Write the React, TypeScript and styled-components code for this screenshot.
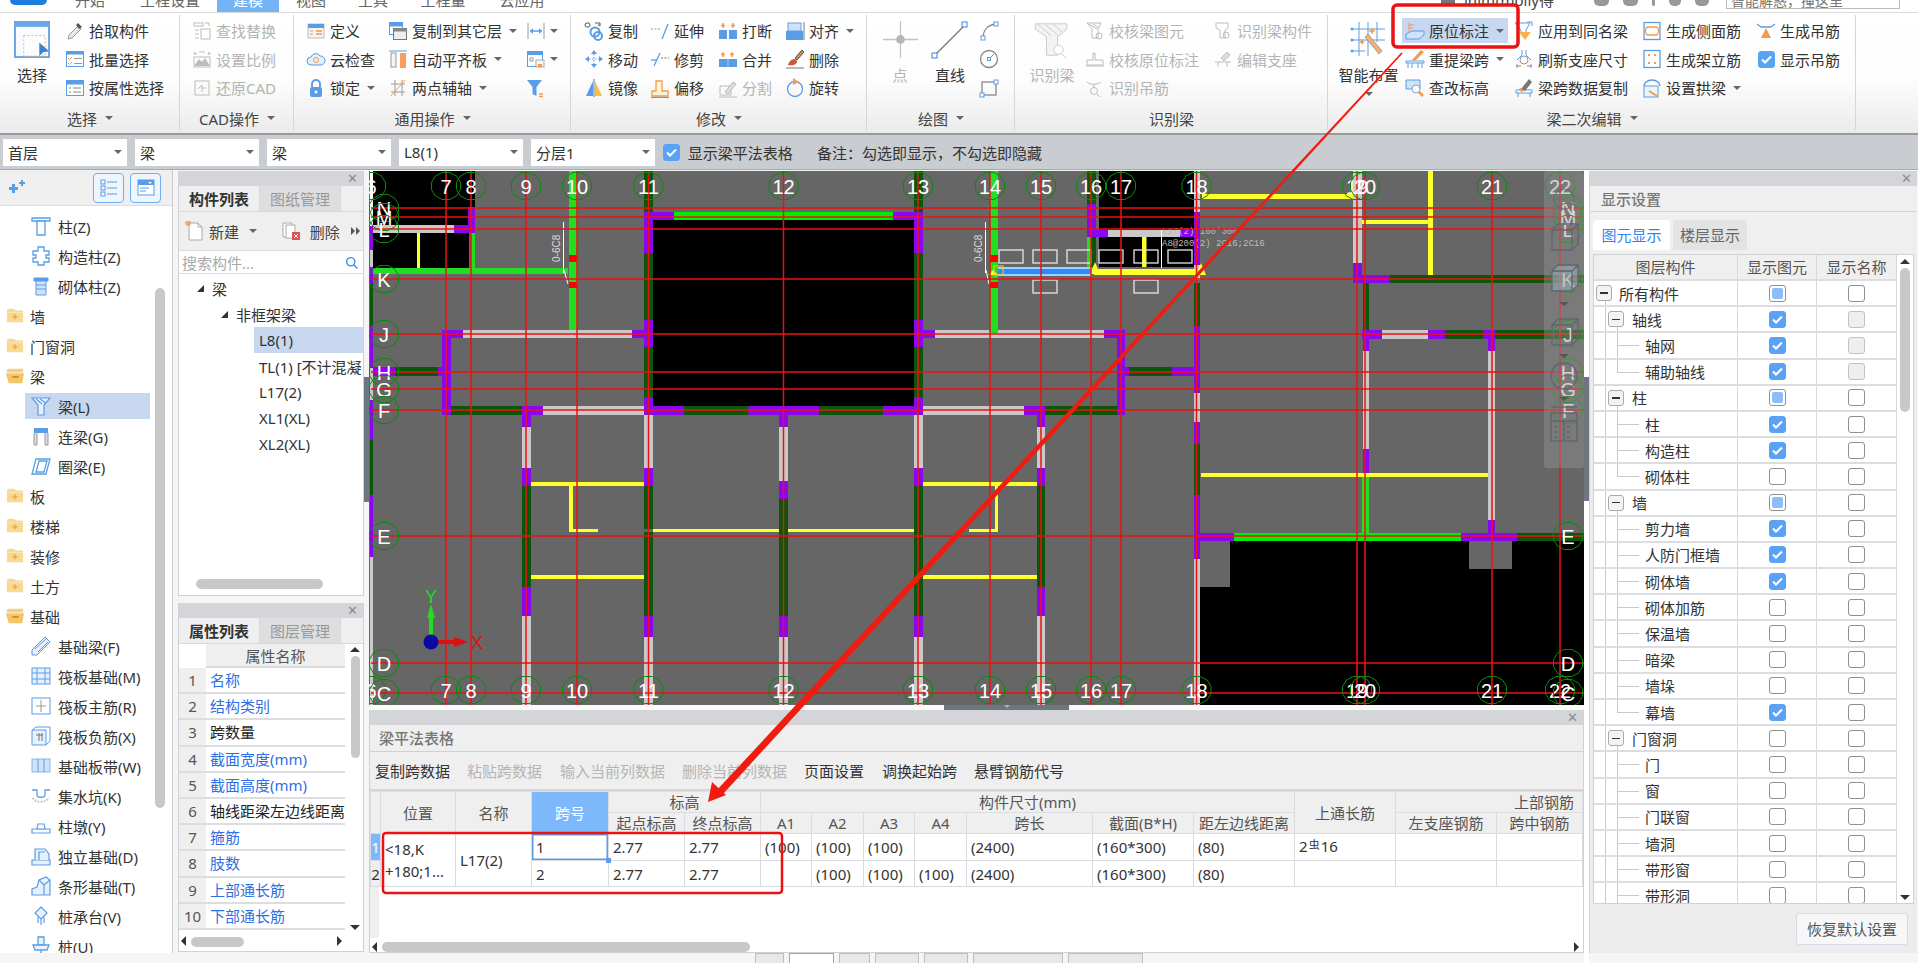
import React from "react";
import styled, { createGlobalStyle } from "styled-components";

const Global = createGlobalStyle`
  html, body { margin: 0; padding: 0; background: #e3e4e7; overflow: hidden; }
  * { box-sizing: border-box; }
  body { font-family: "Noto Sans", "Noto Sans CJK SC", sans-serif; font-size: 15px; color: #333; }
`;

const Root = styled.div`position: relative; width: 1918px; height: 963px; overflow: hidden; display: flex; flex-direction: column; background: #e3e4e7;`;

/* ---------- top strip ---------- */
const TopStrip = styled.div`height: 13px; flex: none; display: flex; background: #fff; border-bottom: 1px solid #dcdcdc; overflow: hidden; color: #555;`;
const LogoSlot = styled.div`width: 57px; flex: none; position: relative;`;
const LogoBlip = styled.div`width: 37px; height: 5px; margin-left: 10px; background: #1c7fe0; border-radius: 0 0 10px 10px;`;
const TopTab = styled.div<{ $w: number; $on?: boolean }>`
  width: ${p => p.$w}px; height: 12px; line-height: 1px; text-align: center; flex: none;
  background: ${p => (p.$on ? "#74b4f6" : "transparent")}; color: ${p => (p.$on ? "#fff" : "#666")};
`;
const TopRight = styled.div`margin-left: auto; display: flex; align-items: flex-start; width: 477px; flex: none;`;
const Avatar = styled.div`width: 14px; height: 5px; background: #777; margin-right: 9px;`;
const UserText = styled.div`width: 130px; line-height: 1px; color: #444;`;
const TopIcons = styled.div`display: flex; gap: 14px; width: 132px; color: #888; font-size: 12px; line-height: 6px;`;
const TopDot = styled.div<{ $w: number }>`width: ${p => p.$w}px; height: 6px; background: #999; border-radius: 0 0 5px 5px;`;
const TopSearch = styled.div`width: 174px; height: 9px; border: 1px solid #bbb; border-top: 0; line-height: 1px; padding-left: 4px; color: #777; font-size: 14px; overflow: hidden;`;

/* ---------- ribbon ---------- */
const Ribbon = styled.div`height: 122px; flex: none; display: flex; background: linear-gradient(#fff 0%, #fdfdfd 55%, #ebebeb 100%); border-bottom: 2px solid #9a9a9a;`;
const GroupWrap = styled.div<{ $w: number }>`
  width: ${p => p.$w}px; flex: none; display: flex; flex-direction: column; position: relative;
  &::after { content: ""; position: absolute; right: 0; top: 2px; bottom: 3px; width: 1px; background: #d6d6d6; }
`;
const GroupBody = styled.div<{ $pad: number }>`height: 93px; padding-left: ${p => p.$pad}px; display: flex; flex: none;`;
const GroupFoot = styled.div`height: 24px; display: flex; align-items: center; justify-content: center; color: #444; white-space: nowrap;`;
const ToolCol = styled.div<{ $w: number }>`width: ${p => p.$w}px; flex: none; display: flex; flex-direction: column; gap: 3.5px; padding-top: 5px;`;
const ToolRow = styled.div<{ $on?: boolean; $off?: boolean }>`
  height: 25px; display: flex; align-items: center; white-space: nowrap;
  color: ${p => (p.$off ? "#b4b4b4" : "#333")};
  background: ${p => (p.$on ? "#c6d7ef" : "transparent")};
  margin-left: ${p => (p.$on ? "-2px" : 0)};
  padding-left: ${p => (p.$on ? "2px" : 0)};
  width: ${p => (p.$on ? "106px" : "auto")};
`;
const IconBox = styled.span`width: 22px; height: 20px; margin-right: 3px; flex: none; display: flex; align-items: center; justify-content: center;`;
const Caret = styled.span<{ $gap?: number }>`
  display: inline-block; width: 0; height: 0; border-left: 4px solid transparent; border-right: 4px solid transparent; border-top: 4px solid #666;
  margin-left: ${p => p.$gap ?? 7}px; flex: none;
`;
const LargeTool = styled.div<{ $w: number; $off?: boolean }>`
  width: ${p => p.$w}px; flex: none; display: flex; flex-direction: column; align-items: center; padding-top: 8px;
  color: ${p => (p.$off ? "#b4b4b4" : "#333")}; white-space: nowrap;
`;
const IconSlot = styled.div`height: 37px; flex: none; display: flex; align-items: center; justify-content: center;`;
const LargeLabel = styled.div`margin-top: 7px; line-height: 20px;`;
const LargeCaret = styled.div`margin-top: 2px; line-height: 6px;`;

/* ---------- sub bar ---------- */
const SubBar = styled.div`height: 35px; flex: none; background: #c9ccd1; display: flex; align-items: center; padding-left: 3px; border-bottom: 1px solid #aaa;`;
const Select = styled.div`width: 124px; height: 27px; margin-right: 8px; background: #fff; display: flex; align-items: center; justify-content: space-between; padding: 0 5px; color: #333; flex: none;`;
const SubText = styled.span<{ $w: number }>`width: ${p => p.$w}px; flex: none; color: #333; white-space: nowrap;`;

/* ---------- main ---------- */
const Main = styled.div`flex: 1; display: flex; background: #f5f5f5; min-height: 0;`;
const LeftNav = styled.div`width: 173px; height: 783px; flex: none; display: flex; flex-direction: column; background: #fff; border-right: 1px solid #c9c9c9; position: relative; overflow: hidden;`;
const NavHead = styled.div`height: 36px; flex: none; background: #efefef; display: flex; align-items: center; padding-left: 7px; margin-bottom: 5px; border-bottom: 1px solid #ddd;`;
const NavBtn = styled.div<{ $ml: number }>`width: 31px; height: 30px; margin-left: ${p => p.$ml}px; border: 1px solid #6fb0f2; border-radius: 4px; background: #eef5fd; display: flex; align-items: center; justify-content: center;`;
const NavRow = styled.div<{ $kid?: boolean; $on?: boolean }>`
  height: 30px; flex: none; display: flex; align-items: center; padding-left: ${p => (p.$kid ? 25 : 6)}px; color: #333; white-space: nowrap; position: relative;
  ${p => p.$on ? `&::before { content: ""; position: absolute; left: 25px; top: 2px; width: 125px; height: 26px; background: #c6d7ef; }` : ""}
  & > * { position: relative; }
`;
const NavIcon = styled.span<{ $kid?: boolean }>`width: ${p => (p.$kid ? 33 : 24)}px; flex: none; display: flex; align-items: center; ${p => p.$kid ? "padding-left: 6px;" : ""}`;
const NavScroll = styled.div`position: absolute; left: 155px; top: 118px; width: 10px; height: 520px; background: #c8c8c8; border-radius: 5px;`;

const MidCol = styled.div`width: 186px; flex: none; margin-left: 5px; display: flex; flex-direction: column; gap: 7px; padding-top: 1px;`;
const Panel = styled.div<{ $h: number }>`height: ${p => p.$h}px; flex: none; display: flex; flex-direction: column; background: #fff; border: 1px solid #cfd1d5; border-top: 0; position: relative; overflow: hidden;`;
const PanelTitle = styled.div`height: 15px; flex: none; background: #d3d5d9; display: flex; align-items: center; justify-content: flex-end; padding-right: 5px; color: #8b8b8b; font-size: 13px; line-height: 15px;`;
const TabRow = styled.div`height: 26px; flex: none; display: flex; background: #efefef; border-bottom: 1px solid #d8d8d8;`;
const PanelTab = styled.div<{ $on?: boolean }>`width: 81px; text-align: center; line-height: 26px; font-weight: ${p => (p.$on ? 700 : 400)}; color: ${p => (p.$on ? "#333" : "#999")}; background: ${p => (p.$on ? "#efefef" : "#dedede")}; border-right: 1px solid #d8d8d8;`;
const PanelTools = styled.div`height: 38px; flex: none; background: #efefef; display: flex; align-items: center; padding: 0 3px 0 6px; color: #444;`;
const MoreTools = styled.div`margin-left: auto; display: flex; gap: 1px;`;
const SearchBox = styled.div`height: 24px; flex: none; background: #fff; border-top: 1px solid #ddd; border-bottom: 1px solid #ddd; display: flex; align-items: center; justify-content: space-between; padding: 0 4px 0 3px; color: #aaa;`;
const TreeBody = styled.div`flex: 1; display: flex; flex-direction: column; padding-top: 1px;`;
const TreeRow = styled.div<{ $pad: number; $on?: boolean }>`
  height: 26px; flex: none; display: flex; align-items: center; white-space: nowrap; overflow: hidden; color: #333;
  margin-left: ${p => (p.$on ? 75 : 0)}px; padding-left: ${p => (p.$on ? 5 : p.$pad)}px; background: ${p => (p.$on ? "#c6d7ef" : "transparent")};
`;
const Tri = styled.span<{ $d: "up" | "down" | "left" | "right"; $c?: string; $s?: number }>`
  display: inline-block; width: 0; height: 0; flex: none;
  ${p => {
    const s = p.$s ?? 5; const c = p.$c ?? "#333";
    if (p.$d === "up") return `border-left:${s}px solid transparent;border-right:${s}px solid transparent;border-bottom:${s}px solid ${c};`;
    if (p.$d === "down") return `border-left:${s}px solid transparent;border-right:${s}px solid transparent;border-top:${s}px solid ${c};`;
    if (p.$d === "left") return `border-top:${s}px solid transparent;border-bottom:${s}px solid transparent;border-right:${s}px solid ${c};`;
    return `border-top:${s}px solid transparent;border-bottom:${s}px solid transparent;border-left:${s}px solid ${c};`;
  }}
`;
const TreeCorner = styled.span`width: 0; height: 0; border-bottom: 7px solid #333; border-left: 7px solid transparent; margin-right: 8px; flex: none;`;
const HThumb = styled.div<{ $l: number; $w: number; $b: number }>`position: absolute; left: ${p => p.$l}px; bottom: ${p => p.$b}px; width: ${p => p.$w}px; height: 10px; background: #c8c8c8; border-radius: 5px;`;
const PropHead = styled.div`height: 24px; flex: none; margin-left: 27px; margin-right: 18px; background: #efefef; text-align: center; line-height: 24px; color: #555; border-bottom: 2px solid #dcdcdc;`;
const PropRow = styled.div`height: 26.2px; flex: none; display: flex; margin-right: 18px; border-bottom: 2px solid #dcdde0; overflow: hidden;`;
const PropNum = styled.div`width: 27px; flex: none; background: #efefef; text-align: center; color: #555; line-height: 25px; font-size: 15px; white-space: nowrap;`;
const PropName = styled.div<{ $blue?: boolean }>`padding-left: 4px; line-height: 25px; color: ${p => (p.$blue ? "#2f6fe4" : "#222")}; white-space: nowrap;`;
const VBarThumb = styled.div`position: absolute; right: 3px; top: 53px; width: 9px; height: 102px; background: #c8c8c8; border-radius: 5px;`;
const ScrollUp = styled.div`position: absolute; display: flex; right: 3px; top: 44px;`;
const ScrollDown = styled.div`position: absolute; display: flex; right: 3px; bottom: 21px;`;
const HArrowL = styled.div`position: absolute; display: flex; left: 2px; bottom: 5px;`;
const HArrowR = styled.div`position: absolute; display: flex; right: 21px; bottom: 5px;`;

/* ---------- centre ---------- */
const MidGap = styled.div`width: 5px; flex: none; position: relative;`;
const MidTab = styled.div`position: absolute; left: 0; top: 207px; width: 5px; height: 125px; background: #6d7781;`;
const Centre = styled.div`width: 1215px; flex: none; display: flex; flex-direction: column; padding-top: 1px;`;
const CanvasWrap = styled.div`height: 534px; flex: none; position: relative; background: #666; overflow: hidden;`;
const CanvasSvg = styled.svg`display: block;`;
const ViewPanel = styled.div`position: absolute; top: 0; right: 0; width: 40px; height: 297px; background: rgba(150,150,150,.42); border-radius: 3px; display: flex; flex-direction: column; align-items: center; padding-top: 18px;`;
const Splitter = styled.div`height: 5px; flex: none; background: #fafafa; display: flex; justify-content: center; padding-left: 150px;`;
const SplitTab = styled.div`width: 125px; height: 5px; background: #6d7781; margin-left: -90px; display: flex; justify-content: center;`;
const BeamPanel = styled.div`height: 243px; flex: none; display: flex; flex-direction: column; background: #fff; border: 1px solid #cfd1d5; border-top: 0; position: relative;`;
const BeamHead = styled.div`height: 27px; flex: none; background: #efefef; border-bottom: 1px solid #d0d0d0; padding-left: 9px; line-height: 26px; color: #777; font-weight: 500;`;
const BeamTools = styled.div`height: 39px; flex: none; background: #efefef; border-bottom: 2px solid #d6d6d6; display: flex; align-items: center; padding-left: 5px;`;
const BeamTool = styled.span<{ $w: number; $off?: boolean }>`width: ${p => p.$w}px; flex: none; white-space: nowrap; color: ${p => (p.$off ? "#b5b5b5" : "#333")};`;
const TableWrap = styled.div`height: 147px; flex: none; overflow: hidden; background: linear-gradient(to right, #efefef 9px, #fff 9px);`;
const Table = styled.table`border-collapse: collapse; table-layout: fixed; width: 1212px; font-size: 15px;`;
const Th = styled.th<{ $blue?: boolean; $right?: boolean }>`
  padding: 0; font-weight: 400; white-space: nowrap; overflow: hidden; height: 21px; line-height: 20px;
  background: ${p => (p.$blue ? "#7db8fa" : "#efefef")}; color: ${p => (p.$blue ? "#fff" : "#555")};
  text-align: ${p => (p.$right ? "right" : "center")}; border: 1px solid #dcdde0; ${p => p.$right ? "padding-right: 8px;" : ""}
`;
const Td = styled.td<{ $active?: boolean; $num?: boolean; $numOn?: boolean; $wrap?: boolean }>`
  padding: ${p => (p.$num ? 0 : "0 0 0 4px")}; height: 26px; white-space: ${p => (p.$wrap ? "normal" : "nowrap")}; overflow: hidden; color: #333; line-height: ${p => (p.$wrap ? 22 : 24)}px;
  border: 1px solid #d9dade; position: relative; text-align: ${p => (p.$num ? "center" : "left")};
  background: ${p => (p.$numOn ? "#7db8fa" : p.$num ? "#efefef" : "#fff")};
  ${p => (p.$numOn ? "color: #fff;" : "")}
  ${p => (p.$active ? "box-shadow: inset 0 0 0 1.5px #5b9de6;" : "")}
  overflow: ${p => (p.$active ? "visible" : "hidden")};
`;
const Handle = styled.span`position: absolute; right: -3px; bottom: -3px; width: 5px; height: 5px; background: #5b9de6; z-index: 1;`;
const Rebar = styled.span`font-size: 11px; position: relative; top: -3px; margin: 0 1px;`;
const BeamScroll = styled.div`flex: 1; position: relative;`;
const BeamThumb = styled.div`position: absolute; left: 12px; top: 4px; width: 368px; height: 10px; background: #c8c8c8; border-radius: 5px;`;
const BeamL = styled.div`position: absolute; display: flex; left: 2px; top: 4px;`;
const BeamR = styled.div`position: absolute; display: flex; right: 4px; top: 4px;`;

/* ---------- right panel ---------- */
const RightGap = styled.div`width: 5px; flex: none; position: relative; background: #fff;`;
const RightTab = styled.div`position: absolute; left: 0; top: 207px; width: 5px; height: 124px; background: #6d7781;`;
const RightPanel = styled.div`width: 328px; height: 782px; margin-top: 1px; flex: none; display: flex; flex-direction: column; background: #ececec; border-left: 1px solid #cfd1d5; position: relative; overflow: hidden;`;
const RightHead = styled.div`height: 26px; flex: none; background: #efefef; border-bottom: 1px solid #d6d6d6; line-height: 26px; padding-left: 11px; color: #777; font-weight: 500;`;
const RightTabs = styled.div`height: 42px; flex: none; display: flex; align-items: flex-end; gap: 3px; padding: 0 0 4px 3px; background: #efefef;`;
const RTab = styled.div<{ $on?: boolean }>`width: ${p => (p.$on ? 77 : 74)}px; height: 30px; text-align: center; line-height: 30px; border-radius: 4px 4px 0 0; color: ${p => (p.$on ? "#2f87ee" : "#666")}; background: ${p => (p.$on ? "#fff" : "#e3e3e3")};`;
const GridWrap = styled.div`height: 650px; flex: none; margin-left: 3px; margin-right: 3px; background: #fff; border: 1px solid #cfd1d5; position: relative; overflow: hidden;`;
const GridHead = styled.div`height: 26px; width: 303px; display: grid; grid-template-columns: 144px 79px 80px; background: #efefef; border-bottom: 2px solid #dcdde0; color: #555; line-height: 24px; text-align: center;`;
const GridHCell = styled.div`border-right: 1px solid #d8d8d8;`;
const GridRow = styled.div`height: 26.2px; width: 303px; display: grid; grid-template-columns: 144px 79px 80px; border-bottom: 2px solid #dcdde0;`;
const gl = "linear-gradient(#c9c9c9,#c9c9c9)";
const TreeCell = styled.div<{ $l: number; $last?: boolean; $root?: boolean }>`
  position: relative; display: flex; align-items: center; border-right: 1px solid #d8d8d8; color: #333; white-space: nowrap;
  padding-left: ${p => (p.$l === 0 ? 2 : p.$l === 1 ? 14 : 51)}px;
  background:
    ${p => (p.$root ? `${gl} 11px 19px/1px 8px no-repeat` : `${gl} 11px 0/1px 100% no-repeat`)}
    ${p => (p.$l === 2 ? `, ${gl} 23px 0/1px ${p.$last ? "13px" : "100%"} no-repeat, ${gl} 23px 12px/22px 1px no-repeat` : "")}
    ${p => (p.$l === 1 ? `, ${gl} 23px 19px/1px 8px no-repeat` : "")};
`;
const Expander = styled.span<{ $l: number }>`width: 16px; height: 16px; background: #f3f3f3; border: 1px solid #aaa; border-radius: 3px; display: flex; align-items: center; justify-content: center; margin-right: ${p => (p.$l === 0 ? 7 : 8)}px; flex: none;`;
const MinusBar = styled.span`width: 8px; height: 1.5px; background: #333;`;
const BoxCell = styled.div`display: flex; align-items: center; justify-content: center; border-right: 1px solid #d8d8d8;`;
const CB = styled.span<{ $k?: string }>`
  width: 17px; height: 17px; border-radius: 3px; flex: none; display: inline-flex; align-items: center; justify-content: center;
  border: 1px solid ${p => (p.$k === "c" ? "#5aa2f5" : p.$k === "d" ? "#c2c2c2" : "#8f8f8f")};
  background: ${p => (p.$k === "c" ? "#5aa2f5" : p.$k === "d" ? "#eee" : "#fff")};
`;
const CBInner = styled.span`width: 11px; height: 11px; background: #8cbcfa; border-radius: 2px;`;
const GridThumb = styled.div`position: absolute; right: 3px; top: 13px; width: 10px; height: 144px; background: #c8c8c8; border-radius: 5px;`;
const GridUp = styled.div`position: absolute; display: flex; right: 3px; top: 4px;`;
const GridDown = styled.div`position: absolute; display: flex; right: 3px; bottom: 3px;`;
const RightFoot = styled.div`flex: 1; display: flex; justify-content: flex-end; align-items: flex-start; padding: 9px 9px 0 0;`;
const ResetBtn = styled.div`width: 112px; height: 32px; border: 1px solid #d3dbe8; border-radius: 3px; background: #f7f7f8; text-align: center; line-height: 30px; color: #555;`;

/* ---------- status ---------- */
const Status = styled.div`position: absolute; left: 755px; top: 953px; height: 10px; display: flex; gap: 5px;`;
const StatusBtn = styled.div<{ $w: number; $on?: boolean }>`width: ${p => p.$w}px; height: 10px; border: 1px solid ${p => (p.$on ? "#6fb0f2" : "#bdbdbd")}; border-bottom: 0; background: ${p => (p.$on ? "#fff" : "#e8e8e8")};`;
const AnnotSvg = styled.svg`position: absolute; left: 0; top: 0; pointer-events: none;`;

/* ---------- icons ---------- */
const B = "#5a9de6", LB = "#cfe3f8", O = "#f59a4a", G = "#bcbcbc";
const ICONS: Record<string, React.ReactNode> = {
  pick: <g><path d="M3 18l1-4 9-9 3 3-9 9z" fill="#e9e9e9" stroke="#999" /><path d="M11 4l2-2 4 4-3 2z" fill="#555" /></g>,
  list: <g><rect x="1.5" y="2.5" width="17" height="15" fill="#fff" stroke={B} /><rect x="1.5" y="2.5" width="17" height="3" fill={B} /><path d="M3 9l1.5 1.5L7 8M3 14l1.5 1.5L7 13" stroke={O} /><path d="M9 9.5h8M9 14.5h8" stroke="#999" /></g>,
  attr: <g><rect x="1.5" y="2.5" width="17" height="15" fill="#fff" stroke={B} /><rect x="1.5" y="2.5" width="17" height="4" fill={B} /><path d="M4 10h2M8 10h8M4 14h2M8 14h8" stroke="#888" /></g>,
  find: <g fill="none" stroke={G}><rect x="2" y="2" width="9" height="3" /><rect x="9" y="8" width="9" height="10" /><path d="M3 9h4M3 13h4M3 17h4M13 2h4v3" /></g>,
  scale: <g><path d="M2 17l5-7 3 3 3-4 5 8z" fill={G} /><path d="M3 3v3M1.5 4.500h3M17 3v3M15.500 4.500h3M7 3h6" stroke={G} /><rect x="2" y="8" width="16" height="10" stroke={G} fill="none" /></g>,
  restore: <g fill="none" stroke={G}><rect x="3" y="3" width="14" height="14" /><path d="M6 11l4-4v3h4M10 14V10" /></g>,
  def: <g><rect x="2" y="3" width="16" height="14" fill="#f4f4f4" stroke="#bbb" /><rect x="2" y="3" width="16" height="4" fill={B} /><path d="M4 10h3M4 13h3" stroke={O} /><path d="M10 10h6M10 13h6" stroke="#f3b070" strokeWidth="2" /></g>,
  cloud: <g><path d="M5 16a4 4 0 0 1 0-8 5 5 0 0 1 9-1 4.500 4.500 0 0 1 1 9z" fill="#e3effb" stroke={B} /><circle cx="10" cy="11" r="2.500" fill="none" stroke={O} /></g>,
  lock: <g><path d="M6 9V6a4 4 0 0 1 8 0v3" fill="none" stroke={B} strokeWidth="2" /><rect x="4" y="9" width="12" height="10" rx="2" fill={B} /><circle cx="10" cy="14" r="1.500" fill="#fff" /></g>,
  copy: <g><rect x="1.500" y="1.500" width="13" height="12" fill="#fff" stroke={B} /><rect x="1.500" y="1.500" width="13" height="4" fill={B} /><rect x="5.500" y="7.500" width="13" height="11" fill="#eee" stroke="#777" /><rect x="5.500" y="7.500" width="13" height="3" fill="#888" /></g>,
  align: <g><path d="M1 2h18" stroke={B} /><rect x="3" y="4" width="5" height="14" fill="#f4f4f4" stroke="#999" /><rect x="12" y="4" width="6" height="15" fill="#f79e62" /></g>,
  twopt: <g stroke="#999" fill="none"><path d="M3 6h14M3 14h14M7 2v16M14 2v16" /><path d="M3 18L17 2" stroke={O} /></g>,
  dim: <g><path d="M2 2v16M18 2v16" stroke="#999" /><path d="M4 10h12" stroke={B} strokeWidth="1.500" /><path d="M4 10l3-3v6zM16 10l-3-3v6z" fill={B} /></g>,
  save: <g><rect x="1.500" y="2.500" width="15" height="15" fill="#fff" stroke={B} /><rect x="1.500" y="2.500" width="15" height="3.500" fill={B} /><rect x="10" y="11" width="8" height="7" fill="#f7f7f7" stroke="#aaa" /><rect x="12" y="15" width="4" height="3" fill={O} /><path d="M4 9h3v3H4z" stroke="#999" /></g>,
  funnel: <g><path d="M1 2h15l-5.500 7v9l-4-2V9z" fill={B} /><path d="M13 16h4M13 18.500h4" stroke={O} strokeWidth="1.500" /></g>,
  cp: <g><rect x="1" y="2" width="5" height="4" fill="#fff" stroke="#555" rx="2" /><path d="M11 2h5v3M16 5l-2-1.500" stroke="#555" /><circle cx="11" cy="11" r="4.500" fill="none" stroke={B} strokeWidth="2" /><circle cx="14" cy="15" r="4" fill="none" stroke={B} strokeWidth="2" /></g>,
  mv: <g fill={B}><path d="M10 1l3 4H7zM10 19l-3-4h6zM1 10l4-3v6zM19 10l-4 3V7z" /><path d="M5 10h10M10 5v10" stroke={B} strokeDasharray="1.500 1.500" /></g>,
  mirror: <g><path d="M9 3L2 18h7z" fill={B} /><path d="M11 3l7 15h-7z" fill="#f8c03c" /><path d="M10 1v18" stroke="#777" /></g>,
  extend: <g><path d="M1 8h9" stroke="#999" strokeDasharray="2 1.500" /><path d="M12 18L18 3" stroke={B} strokeWidth="1.300" /></g>,
  trim: <g><path d="M1 11h6" stroke={B} strokeWidth="1.300" /><path d="M4 17l6-13" stroke={B} strokeWidth="1.300" /><path d="M11 9h8" stroke="#777" strokeDasharray="2 1.500" /></g>,
  off: <g><path d="M2 18v-5h4V3h6v10h6v5z" fill="#fff3d4" stroke={O} strokeWidth="1.300" /><path d="M1 19.500h18" stroke={B} strokeWidth="1.300" /></g>,
  brk: <g><rect x="1" y="9" width="8" height="9" fill={B} /><rect x="11" y="9" width="8" height="9" fill={B} /><path d="M5 2v5M3 4.500h4M15 2v5M13 4.500h4" stroke={O} strokeWidth="1.500" /></g>,
  merge: <g><rect x="1" y="10" width="18" height="8" fill={B} /><path d="M10 10v8" stroke="#a9cdf4" /><path d="M5 3v5M3 5.500h4M14 3v5M12 5.500h4" stroke={O} strokeWidth="1.500" /></g>,
  split: <g fill="none" stroke={G}><path d="M2 17V8h11v9H2z" /><path d="M7 14l8-10 3 2-8 10z" fill="#ddd" /><path d="M1 19h18" /></g>,
  alignr: <g><rect x="3" y="2" width="13" height="8" fill={LB} stroke={B} /><rect x="1" y="10" width="17" height="9" fill={B} /><path d="M19 1v18" stroke="#777" /></g>,
  del: <g><path d="M10 9l7-8 2 2-7 8z" fill="#d28a3e" stroke="#555" /><path d="M3 16c1-4 4-6 7-6l2 2c0 3-3 5-9 4z" fill="#cb5a34" /><path d="M1 19h18" stroke="#777" /></g>,
  rot: <g><circle cx="10" cy="11" r="7.500" fill="none" stroke={B} strokeWidth="1.300" /><path d="M8 0l6 4-6 3z" fill={O} /></g>,
  arc: <g fill="none"><path d="M4 17C4 9 9 4 17 3" stroke="#888" strokeWidth="1.300" /><rect x="2" y="15" width="4" height="4" fill="#fff" stroke={B} /><rect x="15" y="1" width="4" height="4" fill="#fff" stroke={B} /></g>,
  circ: <g fill="none"><circle cx="10" cy="10" r="8.500" stroke="#888" strokeWidth="1.300" /><rect x="8.500" y="8.500" width="3" height="3" stroke={B} /><path d="M11 9l4-4" stroke={B} /></g>,
  rectd: <g fill="none"><rect x="3" y="4" width="14" height="13" stroke="#888" strokeWidth="1.300" /><rect x="1" y="15" width="4" height="4" fill="#fff" stroke={B} /><rect x="15" y="2" width="4" height="4" fill="#fff" stroke={B} /></g>,
  chk1: <g fill="none" stroke={G}><path d="M2 2h14l-3 6v9H7V8z" /><path d="M4 3l8 5M8 3l6 4" /><circle cx="14" cy="15" r="3" /></g>,
  chk2: <g fill="none" stroke={G}><path d="M2 11h6v-7h2v7h8v5H2zM1 17h18" /></g>,
  chk3: <g fill="none" stroke={G}><path d="M2 4c3 3 10 3 14 0" /><path d="M9 6v4" /><circle cx="9" cy="13" r="3.500" /><path d="M12 16l3 3" /></g>,
  chk4: <g fill="none" stroke={G}><path d="M3 2h12v5l-3 2v8H7V9L3 7z" /><circle cx="13" cy="14" r="3" /></g>,
  chk5: <g fill="none" stroke={G}><path d="M2 13h16M5 13v5M14 13v5" /><path d="M8 9l6-6 3 3-6 6z" fill="#ddd" /></g>,
  yuan: <g><path d="M4 2v9M4 4h5M4 7h4" stroke={O} /><path d="M1 13l6-3h12v4l-5 4H1z" fill={LB} stroke={B} /></g>,
  tizhong: <g><path d="M1 12h18v2H1zM3 14v5M7 14v5M13 14v5M17 14v5" stroke={B} fill="none" /><path d="M7 11L16 1l3 2-9 9z" fill={O} /></g>,
  gai: <g><path d="M1 2h14v9H1z" fill={LB} stroke={B} /><circle cx="11" cy="11" r="4" fill="#fff" stroke="#7fa6cc" /><path d="M14 14l4 4" stroke={O} strokeWidth="2.500" /></g>,
  same: <g><path d="M1 2h15l-4 7v3H7V9z" fill="#fff" stroke={B} /><path d="M5 11h12l-6 8z" fill="#f8b24a" /><path d="M13 1h5v4" stroke={B} /></g>,
  refresh: <g fill="none"><path d="M8 1v5l-5 5M12 1v5l5 5" stroke={B} /><circle cx="10" cy="11" r="4" stroke="#999" /><path d="M2 17h5M13 17h5" stroke={O} strokeWidth="1.500" /><path d="M3 15v4M17 15v4" stroke={B} /></g>,
  cpy: <g><path d="M2 12h16v3H2zM4 15v4M16 15v4" fill="#fff" stroke={B} /><path d="M7 11L15 1l3 3-7 9z" fill="#777" /><path d="M5 11l2-1 3 3-3 1z" fill={O} /></g>,
  side: <g fill="none"><rect x="2" y="1.500" width="16" height="17" stroke={B} strokeWidth="1.300" /><path d="M5 6h10M5 14h10M5 6c-2 2-2 6 0 8M15 6c2 2 2 6 0 8" stroke={O} strokeWidth="1.300" /></g>,
  jia: <g fill="none"><rect x="2" y="1.500" width="16" height="17" stroke={B} strokeWidth="1.300" /><path d="M6 5h2v2H6zM12 5h2v2h-2zM6 13h2v2H6zM12 13h2v2h-2z" fill={O} /></g>,
  arch: <g><path d="M2 8a8 6 0 0 1 16 0" fill="none" stroke={B} strokeWidth="1.500" /><rect x="2" y="8" width="14" height="11" fill="#eef4fb" stroke={B} /><path d="M7 13l8 5" stroke={O} strokeWidth="2" /></g>,
  diao: <g><path d="M1 3l4 3M19 3l-4 3M5 6h10" stroke={B} strokeWidth="1.300" /><path d="M10 7l5 10H5z" fill={O} /></g>,
  sparkle: <g fill={B}><path d="M9 5h3v3h3v3h-3v3H9v-3H6V8h3z" transform="translate(-4 1)" /><path d="M14 2h2v2h2v2h-2v2h-2V6h-2V4h2z" /></g>,
  navl: <g fill="none" stroke={B}><rect x="2" y="2" width="4" height="4" /><rect x="2" y="8" width="4" height="4" /><rect x="2" y="14" width="4" height="4" /><path d="M8 4h10M8 10h10M8 16h10" /></g>,
  navw: <g><rect x="2" y="2" width="16" height="15" fill="#fff" stroke={B} /><rect x="2" y="2" width="16" height="5" fill={B} /><path d="M4 10h9M4 13h6" stroke={B} /><path d="M12 4h4l-2 2z" fill="#fff" /></g>,
  newdoc: <g><path d="M4 2h9l4 4v13H4z" fill="#fff" stroke="#aaa" /><path d="M1 0h4v4H1zM0 2h6M3 0v5" stroke={O} /><path d="M13 2v4h4" stroke="#aaa" fill="none" /></g>,
  deldoc: <g><path d="M1 2h9v14H1z" fill="#fff" stroke="#aaa" /><path d="M4 4h9v13H4z" fill="#fff" stroke="#aaa" /><rect x="10" y="11" width="8" height="8" fill="#e35252" /><path d="M12 13l4 4M16 13l-4 4" stroke="#fff" /></g>,
  mag: <g fill="none" stroke="#3b8fe8" strokeWidth="1.800"><circle cx="9" cy="9" r="5.500" /><path d="M13 13l5 5" /></g>,
  col: <g fill="#fff" stroke={B} strokeWidth="1.300"><path d="M1 2h18v3H1z" /><path d="M6 5h8v14H6z" /></g>,
  gz: <g fill="#fff" stroke={B} strokeWidth="1.300"><path d="M7 1h6v4h5v4h-3v3h3v4h-5v3H7v-3H2v-4h3V9H2V5h5z" /></g>,
  qt: <g fill={LB} stroke={B}><path d="M3 2h14v3H3z" fill={B} /><path d="M5 5h10v14H5zM5 9h10M5 13h10" /></g>,
  lbeam: <g fill="none" stroke={B} strokeWidth="1.200"><path d="M1 2h18l-6 7v10h-6V9z" fill="#e7f1fc" /><path d="M5 3l6 5M9 3l6 4" /></g>,
  lk: <g><rect x="3" y="2" width="14" height="5" fill={B} /><path d="M3 7v12h3V7M14 7v12h3V7" fill="#ddd" stroke="#999" /></g>,
  ql: <g fill="none" stroke={B} strokeWidth="1.300"><path d="M5 3h14l-4 15H1z" /><path d="M8 5h8l-3 11H5z" /></g>,
  jcl: <g><path d="M1 14L14 1l5 5L6 19H1z" fill="#e7f1fc" stroke={B} /><path d="M4 13L15 3M7 16L17 6" stroke={B} /></g>,
  fbjc: <g fill="#e7f1fc" stroke={B}><rect x="1" y="2" width="18" height="16" /><path d="M6 2v16M14 2v16M1 7h18M1 13h18" /></g>,
  fbzj: <g fill="none" stroke={B}><rect x="1" y="2" width="18" height="16" /><path d="M10 4v12M5 10h10" stroke="#999" /></g>,
  fbfj: <g fill="#e7f1fc" stroke={B}><path d="M1 4h14v15H1z" /><path d="M1 4l4-3h14v14l-4 4" fill="none" /><path d="M5 9h7M8 7v8M11 7v8" stroke="#777" /></g>,
  jcbd: <g fill={LB} stroke="#8eb8e4"><rect x="1" y="3" width="18" height="13" /><path d="M7 3v13M13 3v13" stroke={B} /></g>,
  jsk: <g><path d="M1 4h5v5c0 3 8 3 8 0V4h5" fill="none" stroke={B} strokeWidth="1.300" /><path d="M2 12c2 5 13 5 16 0" fill="none" stroke="#bbb" strokeDasharray="1.500 1.500" strokeWidth="2" /></g>,
  zd: <g fill="#fff" stroke={B} strokeWidth="1.200"><path d="M1 13h18v4H1z" /><path d="M6 13l1-5h6l1 5z" /></g>,
  dl: <g fill="#e7f1fc" stroke={B} strokeWidth="1.200"><path d="M1 14h18v5H1z" /><path d="M4 14V3h10l4 5v6" /><path d="M8 14V6h6" fill="none" /></g>,
  tx: <g fill="#e7f1fc" stroke={B} strokeWidth="1.200"><path d="M1 19v-6l5-2 2-7 7-3 4 3v15z" /><path d="M8 4l5 5v10M13 9l6-5" fill="none" /></g>,
  zc: <g fill="#e7f1fc" stroke={B} strokeWidth="1.200"><path d="M10 1l6 6-6 6-6-6z" /><path d="M7 11v6M10 13v6M13 11v6" /></g>,
  zh: <g fill="#e7f1fc" stroke={B} strokeWidth="1.300"><path d="M7 1h6v8H7z" /><path d="M2 9h16l-2 5H4zM10 14v5" /></g>,
  fold: <g><path d="M1 4a2 2 0 0 1 2-2h6l2 2h7a1 1 0 0 1 1 1v12H1z" fill="#f7d98f" /><path d="M1 6h18" stroke="#fbe7b5" /><path d="M7 11h6M10 8v6" stroke="#e9a94a" strokeWidth="1.600" /></g>,
  open: <g><path d="M1 4a2 2 0 0 1 2-2h16v4H1z" fill="#f3cf7f" /><path d="M0 7h20l-2 11H3z" fill="#f4c664" /><path d="M7 11h7" stroke="#b98424" strokeWidth="1.600" /></g>,
};
const Ico = ({ n, s = 20 }: { n: string; s?: number }) => <svg width={s} height={s} viewBox="0 0 20 20" fill="none">{ICONS[n]}</svg>;

const Tool = ({ i, t, off, c, on }: { i: string; t?: string; off?: boolean; c?: boolean; on?: boolean }) => (
  <ToolRow $off={off} $on={on}>
    <IconBox><Ico n={i} /></IconBox>
    {t && <span>{t}</span>}
    {c && <Caret $gap={t ? 7 : 0} />}
  </ToolRow>
);
const Group = ({ w, pad, title, noCaret, children }: { w: number; pad: number; title: string; noCaret?: boolean; children: React.ReactNode }) => (
  <GroupWrap $w={w}>
    <GroupBody $pad={pad}>{children}</GroupBody>
    <GroupFoot>{title}{!noCaret && <Caret $gap={8} />}</GroupFoot>
  </GroupWrap>
);

const LargeSelect = () => (
  <svg width="37" height="37" viewBox="0 0 38 38" fill="none">
    <rect x="1" y="1" width="35" height="36" fill="#f7fbff" stroke="#6aa6e6" strokeWidth="2" />
    <rect x="1" y="1" width="35" height="5" fill="#6aa6e6" />
    <rect x="10" y="15" width="22" height="21" fill="#fdfdfd" stroke="#f8b548" strokeDasharray="2 2" />
    <path d="M26 22l10 9-6 1-4 4z" fill="#3b82d6" />
  </svg>
);
const LargePoint = () => (
  <svg width="37" height="37" viewBox="0 0 38 38" fill="none">
    <path d="M19 0v38M1 19h36" stroke="#c4c4c4" strokeWidth="1.300" />
    <circle cx="19" cy="19" r="4.500" fill="#b5b5b5" />
  </svg>
);
const LargeLine = () => (
  <svg width="38" height="38" viewBox="0 0 38 38" fill="none">
    <path d="M4 34L34 4" stroke="#777" strokeWidth="1.200" />
    <rect x="1" y="32" width="5" height="5" fill="#fff" stroke="#3b82d6" />
    <rect x="31" y="1" width="5" height="5" fill="#fff" stroke="#3b82d6" />
  </svg>
);
const LargeRec = () => (
  <svg width="38" height="37" viewBox="0 0 40 40" fill="none" stroke="#c8c8c8">
    <path d="M2 3h34v6l-10 8v20H14V17L2 9z" fill="#f3f3f3" />
    <path d="M5 4l14 12M13 4l13 11M22 4l9 8" />
    <circle cx="27" cy="31" r="5" fill="#fff" /><path d="M30 35l5 5" />
  </svg>
);
const LargeSmart = () => (
  <svg width="38" height="37" viewBox="0 0 38 37" fill="none">
    <path d="M1 8h34M1 19h34M1 30h14M9 1v34M18 1v34M27 1v20" stroke="#5a9de6" />
    <path d="M15 16l3-3 14 17-3 3z" fill="#f0b077" stroke="#888" strokeWidth="0.700" />
    <path d="M21 9l1-3 1 3 3 1-3 1-1 3-1-3-3-1zM11 20l1-2 1 2 2 1-2 1-1 2-1-2-2-1z" fill="#f59a4a" />
    <circle cx="2" cy="8" r="1.500" fill="#5a9de6" /><circle cx="2" cy="19" r="1.500" fill="#5a9de6" /><circle cx="2" cy="30" r="1.500" fill="#5a9de6" />
  </svg>
);

/* ---------- canvas drawing ---------- */
const P = "#8a05f0", D = "#0a570a", GY = "#c9c9c9", L = "#22dd22", BG = "#00ee00", Y = "#ffff2a", R = "#ee1010", W = "#fff";
type Run = (number | string)[];
const vr = (x0: number, x1: number, ...s: Run) => {
  const out: React.ReactNode[] = [];
  for (let i = 0; i + 2 < s.length; i += 2) out.push(<rect key={`v${x0}-${i}`} x={x0} y={s[i] as number} width={x1 - x0} height={(s[i + 2] as number) - (s[i] as number)} fill={s[i + 1] as string} />);
  return out;
};
const hr = (y0: number, y1: number, ...s: Run) => {
  const out: React.ReactNode[] = [];
  for (let i = 0; i + 2 < s.length; i += 2) out.push(<rect key={`h${y0}-${s[i]}`} x={s[i] as number} y={y0} width={(s[i + 2] as number) - (s[i] as number)} height={y1 - y0} fill={s[i + 1] as string} />);
  return out;
};
const box = (x0: number, y0: number, x1: number, y1: number, c: string, k: string) => <rect key={k} x={x0} y={y0} width={x1 - x0} height={y1 - y0} fill={c} />;
const gridX: [string, number][] = [["7", 447], ["8", 472], ["9", 527], ["10", 578], ["11", 649.5], ["12", 784.5], ["13", 919], ["14", 991], ["15", 1042], ["16", 1092], ["17", 1122], ["18", 1197.5], ["19", 1358], ["20", 1366], ["21", 1493], ["22", 1561]];
const gridY: [string, number][] = [["N", 208], ["M", 217], ["L", 229], ["K", 279], ["J", 334], ["H", 372], ["G", 389], ["F", 410], ["E", 536], ["D", 663], ["C", 693]];
const octa = (cx: number, cy: number) => {
  const pts: string[] = [];
  for (let i = 0; i < 12; i++) { const a = (i * Math.PI) / 6 + 0.26; pts.push(`${(cx + 15 * Math.cos(a)).toFixed(1)},${(cy + 14 * Math.sin(a)).toFixed(1)}`); }
  return pts.join(" ");
};
const Bubble = ({ x, y, t }: { x: number; y: number; t: string }) => (
  <g>
    <polygon points={octa(x, y)} fill="none" stroke="#0a8a0a" strokeWidth="1" />
    <text x={x} y={y + 7.500} textAnchor="middle" fill="#fff" fontFamily='"Liberation Sans", sans-serif' fontSize="20">{t}</text>
  </g>
);
const SmallBeamRect = ({ x, y, w = 24 }: { x: number; y: number; w?: number }) => <rect x={x} y={y} width={w} height={13} fill="none" stroke="#e8e8e8" strokeWidth="1.300" />;

const CadCanvas = () => (
  <CanvasSvg width="1215" height="534" viewBox="370 171 1215 534">
    <rect x="370" y="171" width="1215" height="534" fill="#666" />
    {box(374, 171, 470, 268, "#000", "b1")}
    {box(654, 220, 915, 407, "#000", "b2")}
    {box(1100, 171, 1195, 267, "#000", "b3")}
    {box(1201, 541, 1585, 705, "#000", "b4")}
    {box(1201, 541, 1231, 587, "#666", "n1")}
    {box(1470, 541, 1513, 569, "#666", "n2")}
    {vr(371, 374, 171, W, 226, P, 250, GY, 267, P, 283, D, 326, P, 368, GY, 400, P, 440, D, 495, P, 557, GY, 705)}
    {hr(225, 233, 374, GY, 455, P, 476)}
    {vr(469, 476, 171, "#000", 207, P, 233)}
    {vr(472, 476, 233, L, 268)}
    {hr(268, 274, 374, L, 569)}
    {vr(418, 421, 233, Y, 268)}
    {vr(570, 578, 171, L, 255, "#ff0000", 262, L, 282, "#ff0000", 288, L, 333)}
    {hr(330, 338, 443, P, 464, GY, 633, P, 654)}
    {vr(443, 452, 330, P, 415)}
    {hr(406, 415, 452, D, 523, P, 544, GY, 645, P, 685, D, 749.500, P, 820, D, 884, P, 924, GY, 1025, P, 1046, D, 1118, P, 1126)}
    {hr(367, 376, 374, P, 396, D, 439, P, 443)}
    {hr(212, 220, 645, P, 675, BG, 894, P, 924)}
    {vr(645, 654, 171, D, 212, P, 253, D, 320, P, 347, D, 397, P, 415, GY, 468, P, 486, D, 616, P, 637, GY, 705)}
    {vr(915, 924, 171, D, 212, P, 253, D, 320, P, 347, D, 397, P, 415, GY, 468, P, 486, D, 616, P, 637, GY, 705)}
    {hr(330, 338, 924, P, 936, GY, 1105, P, 1126)}
    {vr(1118, 1126, 330, P, 415)}
    {vr(991, 999, 171, L, 255, "#ff0000", 262, L, 282, "#ff0000", 288, L, 333)}
    {vr(523, 532, 415, P, 427, GY, 468, P, 486, D, 587, P, 616, GY, 705)}
    {vr(780, 789, 415, P, 427, GY, 481, P, 499, D, 616, P, 637, GY, 705)}
    {vr(1038, 1046, 415, P, 427, GY, 468, P, 486, D, 587, P, 616, GY, 705)}
    {hr(482, 486, 532, Y, 645)}
    {vr(570, 574, 486, Y, 532)}
    {hr(529, 532, 570, Y, 599, "#666", 654, Y, 780)}
    {hr(529, 532, 789, Y, 915)}
    {hr(529, 532, 970, Y, 999)}
    {vr(996, 999, 486, Y, 532)}
    {hr(482, 486, 924, Y, 1038)}
    {hr(575, 579, 532, Y, 645)}
    {hr(575, 579, 924, Y, 1038)}
    {vr(1088, 1097, 171, D, 204, P, 237)}
    {vr(1088, 1092, 237, L, 267)}
    {vr(1092, 1097, 237, D, 267)}
    {hr(230, 237, 1088, P, 1109, GY, 1181, P, 1197)}
    {vr(1195, 1201, 171, GY, 212, P, 265, GY, 280)}
    {hr(194, 199, 1203, Y, 1354)}
    {vr(1195, 1201, 283, D, 326, P, 393, GY, 422, P, 444, D, 495, P, 559, GY, 705)}
    {hr(367, 376, 1126, P, 1130, D, 1173, P, 1195)}
    {hr(533, 541, 1195, P, 1235, BG, 1462, P, 1518, D, 1585)}
    {vr(1363, 1370, 477, L, 533)}
    {vr(1364, 1370, 283, D, 330, P, 351, GY, 449, P, 477)}
    {vr(1354, 1363, 171, GY, 263, P, 283)}
    {hr(275, 283, 1354, P, 1391, D, 1585)}
    {hr(220, 224, 1363, Y, 1432)}
    {vr(1429, 1434, 171, Y, 275)}
    {hr(330, 339, 1363, P, 1383, GY, 1429, P, 1446, D, 1484, P, 1496, D, 1585)}
    {vr(1489, 1496, 330, P, 351, GY, 520, P, 533)}
    {hr(473, 477, 1202, Y, 1489)}
    {vr(1143, 1147.500, 237, Y, 267)}
    {vr(1162, 1163, 230, W, 268)}
    {vr(564, 565, 222, W, 273)}
    {vr(986, 987, 222, W, 273)}
    <path d="M565 270l4 14M987 270l3 14" stroke="#fff" />
    <text transform="translate(561 262) rotate(-90)" fontSize="10" fill="#ddd" fontFamily='"Liberation Sans", sans-serif'>0-6C8</text>
    <text transform="translate(983 262) rotate(-90)" fontSize="10" fill="#ddd" fontFamily='"Liberation Sans", sans-serif'>0-6C8</text>
    {hr(267, 276, 999, "#9fd0ff", 1092, "#9fd0ff", 1093)}
    {hr(269, 274, 999, "#2a8cff", 1092)}
    {hr(269, 275, 1095, Y, 1197)}
    <path d="M1096 262l-5 12h10zM1202 263l-5 12h10zM994 270l5 5h-10z" fill={Y} />
    <rect x="995" y="266" width="9" height="9" fill="none" stroke="#ffd200" />
    <SmallBeamRect x={1000} y={250} />
    <SmallBeamRect x={1034} y={250} />
    <SmallBeamRect x={1068} y={250} />
    <SmallBeamRect x={1100} y={250} />
    <SmallBeamRect x={1135} y={250} />
    <SmallBeamRect x={1169} y={250} />
    <SmallBeamRect x={1034} y={280} />
    <SmallBeamRect x={1135} y={280} />
    <text x="1163" y="234" fontSize="9" fill="#bbb" fontFamily='"Liberation Mono", monospace'>L17(2) 160*300</text>
    <text x="1163" y="246" fontSize="9" fill="#bbb" fontFamily='"Liberation Mono", monospace'>A8@200(2) 2C16;2C16</text>
    {gridX.map(([t, x]) => <rect key={t} x={x - 0.75} y="171" width="1.500" height="534" fill={R} />)}
    {gridY.map(([t, y]) => <rect key={t} x="372" y={y - 0.75} width="1213" height="1.500" fill={R} />)}
    <Bubble x={372} y={186} t="6" />
    <Bubble x={372} y={690} t="6" />
    {gridX.map(([t, x]) => <Bubble key={`t${t}`} x={x} y={186} t={t} />)}
    {gridX.map(([t, x]) => <Bubble key={`b${t}`} x={x} y={690} t={t} />)}
    {gridY.map(([t, y]) => <Bubble key={`l${t}`} x={385} y={y} t={t} />)}
    {gridY.map(([t, y]) => <Bubble key={`r${t}`} x={1569} y={y} t={t} />)}
    <path d="M432 642V612" stroke="#22dd22" strokeWidth="4" />
    <path d="M432 604l4 14h-8z" fill="#22dd22" />
    <path d="M432 642h24" stroke="#dd1010" strokeWidth="4" />
    <path d="M469 642l-14 5v-10z" fill="#dd1010" />
    <circle cx="432" cy="642" r="7.500" fill="#0a0aa0" />
    <text x="432" y="603" textAnchor="middle" fontSize="18" fill="#22dd22" fontFamily='"Liberation Sans", sans-serif'>Y</text>
    <text x="478" y="649" textAnchor="middle" fontSize="18" fill="#dd1010" fontFamily='"Liberation Sans", sans-serif'>X</text>
  </CanvasSvg>
);

const ViewIcons = () => (
  <svg width="30" height="270" viewBox="0 0 30 270" fill="none" stroke="#5c6670" strokeWidth="1.300">
    <circle cx="15" cy="10" r="10" opacity="0.7" />
    <path d="M5 50l6-6h20v20l-6 6H5zM5 50h20v20M25 50l6-6" transform="translate(-2 -9)" />
    <path d="M5 50l6-6h20v20l-6 6H5zM5 50h20v20M25 50l6-6" transform="translate(-2 32)" fill="#9eb2c4" fillOpacity="0.5" />
    <path d="M10 113l5 4 5-4" fill="#555" stroke="none" />
    <path d="M5 50l6-6h20v20l-6 6H5zM5 50h20v20M25 50l6-6" transform="translate(-2 86)" />
    <path d="M10 165l5 4 5-4" fill="#555" stroke="none" />
    <circle cx="15" cy="187" r="13" />
    <path d="M10 208l5 4 5-4" fill="#555" stroke="none" />
    <path d="M2 218h26" />
    <rect x="2" y="224" width="26" height="28" />
    <path d="M2 232h26M15 232v20M5 238h3M5 243h3M5 248h3M18 238h3M18 243h3M18 248h3" />
  </svg>
);

/* ---------- data ---------- */
const nav: [string, string, boolean?, boolean?][] = [
  ["col", "柱(Z)", true], ["gz", "构造柱(Z)", true], ["qt", "砌体柱(Z)", true],
  ["fold", "墙"], ["fold", "门窗洞"], ["open", "梁"],
  ["lbeam", "梁(L)", true, true], ["lk", "连梁(G)", true], ["ql", "圈梁(E)", true],
  ["fold", "板"], ["fold", "楼梯"], ["fold", "装修"], ["fold", "土方"], ["open", "基础"],
  ["jcl", "基础梁(F)", true], ["fbjc", "筏板基础(M)", true], ["fbzj", "筏板主筋(R)", true], ["fbfj", "筏板负筋(X)", true],
  ["jcbd", "基础板带(W)", true], ["jsk", "集水坑(K)", true], ["zd", "柱墩(Y)", true], ["dl", "独立基础(D)", true],
  ["tx", "条形基础(T)", true], ["zc", "桩承台(V)", true], ["zh", "桩(U)", true],
];
const props: [string, boolean][] = [["名称", true], ["结构类别", true], ["跨数量", false], ["截面宽度(mm)", true], ["截面高度(mm)", true], ["轴线距梁左边线距离", false], ["箍筋", true], ["肢数", true], ["上部通长筋", true], ["下部通长筋", true]];
const layers: { t: string; l: number; a?: string; b?: string; last?: boolean; root?: boolean }[] = [
  { t: "所有构件", l: 0, a: "p", root: true },
  { t: "轴线", l: 1, a: "c", b: "d" }, { t: "轴网", l: 2, a: "c", b: "d" }, { t: "辅助轴线", l: 2, a: "c", b: "d", last: true },
  { t: "柱", l: 1, a: "p" }, { t: "柱", l: 2, a: "c" }, { t: "构造柱", l: 2, a: "c" }, { t: "砌体柱", l: 2, last: true },
  { t: "墙", l: 1, a: "p" }, { t: "剪力墙", l: 2, a: "c" }, { t: "人防门框墙", l: 2, a: "c" }, { t: "砌体墙", l: 2, a: "c" },
  { t: "砌体加筋", l: 2 }, { t: "保温墙", l: 2 }, { t: "暗梁", l: 2 }, { t: "墙垛", l: 2 }, { t: "幕墙", l: 2, a: "c", last: true },
  { t: "门窗洞", l: 1 }, { t: "门", l: 2 }, { t: "窗", l: 2 }, { t: "门联窗", l: 2 }, { t: "墙洞", l: 2 }, { t: "带形窗", l: 2 }, { t: "带形洞", l: 2 },
];
const Check = ({ k }: { k?: string }) => (
  <CB $k={k}>
    {k === "c" && <svg width="11" height="9" viewBox="0 0 11 9" fill="none"><path d="M1 4.500l3 3 6-6" stroke="#fff" strokeWidth="2" /></svg>}
    {k === "p" && <CBInner />}
  </CB>
);
const widths = [10, 75, 76, 77, 76, 76, 51, 52, 51, 52, 126, 101, 101, 101, 101, 86];

export default function App() {
  return (
    <Root>
      <Global />
      <TopStrip>
        <LogoSlot><LogoBlip /></LogoSlot>
        <TopTab $w={66}>开始</TopTab>
        <TopTab $w={94}>工程设置</TopTab>
        <TopTab $w={62} $on>建模</TopTab>
        <TopTab $w={64}>视图</TopTab>
        <TopTab $w={60}>工具</TopTab>
        <TopTab $w={80}>工程量</TopTab>
        <TopTab $w={78}>云应用</TopTab>
        <TopRight>
          <Avatar />
          <UserText>lnlmtmolly得</UserText>
          <TopIcons><TopDot $w={15} /><TopDot $w={15} /><TopDot $w={3} /><TopDot $w={12} /><TopDot $w={14} /></TopIcons>
          <TopSearch>智能解惑，撞这里</TopSearch>
        </TopRight>
      </TopStrip>
      <Ribbon>
        <Group w={180} pad={0} title="选择">
          <LargeTool $w={64}><IconSlot><LargeSelect /></IconSlot><LargeLabel>选择</LargeLabel></LargeTool>
          <ToolCol $w={110}>
            <Tool i="pick" t="拾取构件" /><Tool i="list" t="批量选择" /><Tool i="attr" t="按属性选择" />
          </ToolCol>
        </Group>
        <Group w={114} pad={11} title="CAD操作">
          <ToolCol $w={100}>
            <Tool i="find" t="查找替换" off /><Tool i="scale" t="设置比例" off /><Tool i="restore" t="还原CAD" off />
          </ToolCol>
        </Group>
        <Group w={277} pad={11} title="通用操作">
          <ToolCol $w={82}><Tool i="def" t="定义" /><Tool i="cloud" t="云检查" /><Tool i="lock" t="锁定" c /></ToolCol>
          <ToolCol $w={138}><Tool i="copy" t="复制到其它层" c /><Tool i="align" t="自动平齐板" c /><Tool i="twopt" t="两点辅轴" c /></ToolCol>
          <ToolCol $w={40}><Tool i="dim" c /><Tool i="save" c /><Tool i="funnel" /></ToolCol>
        </Group>
        <Group w={296} pad={12} title="修改">
          <ToolCol $w={66}><Tool i="cp" t="复制" /><Tool i="mv" t="移动" /><Tool i="mirror" t="镜像" /></ToolCol>
          <ToolCol $w={68}><Tool i="extend" t="延伸" /><Tool i="trim" t="修剪" /><Tool i="off" t="偏移" /></ToolCol>
          <ToolCol $w={67}><Tool i="brk" t="打断" /><Tool i="merge" t="合并" /><Tool i="split" t="分割" off /></ToolCol>
          <ToolCol $w={70}><Tool i="alignr" t="对齐" c /><Tool i="del" t="删除" /><Tool i="rot" t="旋转" /></ToolCol>
        </Group>
        <Group w={148} pad={11} title="绘图">
          <LargeTool $w={44} $off><IconSlot><LargePoint /></IconSlot><LargeLabel>点</LargeLabel></LargeTool>
          <LargeTool $w={56}><IconSlot><LargeLine /></IconSlot><LargeLabel>直线</LargeLabel></LargeTool>
          <ToolCol $w={30}><Tool i="arc" /><Tool i="circ" /><Tool i="rectd" /></ToolCol>
        </Group>
        <Group w={313} pad={5} title="识别梁" noCaret>
          <LargeTool $w={64} $off><IconSlot><LargeRec /></IconSlot><LargeLabel>识别梁</LargeLabel></LargeTool>
          <ToolCol $w={128}><Tool i="chk1" t="校核梁图元" off /><Tool i="chk2" t="校核原位标注" off /><Tool i="chk3" t="识别吊筋" off /></ToolCol>
          <ToolCol $w={110}><Tool i="chk4" t="识别梁构件" off /><Tool i="chk5" t="编辑支座" off /></ToolCol>
        </Group>
        <Group w={528} pad={5} title="梁二次编辑">
          <LargeTool $w={71}><IconSlot><LargeSmart /></IconSlot><LargeLabel>智能布置</LargeLabel><LargeCaret><Caret $gap={0} /></LargeCaret></LargeTool>
          <ToolCol $w={109}><Tool i="yuan" t="原位标注" c on /><Tool i="tizhong" t="重提梁跨" c /><Tool i="gai" t="查改标高" /></ToolCol>
          <ToolCol $w={128}><Tool i="same" t="应用到同名梁" /><Tool i="refresh" t="刷新支座尺寸" /><Tool i="cpy" t="梁跨数据复制" /></ToolCol>
          <ToolCol $w={114}><Tool i="side" t="生成侧面筋" /><Tool i="jia" t="生成架立筋" /><Tool i="arch" t="设置拱梁" c /></ToolCol>
          <ToolCol $w={90}>
            <Tool i="diao" t="生成吊筋" />
            <ToolRow><IconBox><Check k="c" /></IconBox><span>显示吊筋</span></ToolRow>
          </ToolCol>
        </Group>
      </Ribbon>
      <SubBar>
        <Select>首层<Caret /></Select>
        <Select>梁<Caret /></Select>
        <Select>梁<Caret /></Select>
        <Select>L8(1)<Caret /></Select>
        <Select>分层1<Caret /></Select>
        <Check k="c" />
        <SubText $w={137}>&nbsp;&nbsp;显示梁平法表格</SubText>
        <SubText $w={300}>备注：勾选即显示，不勾选即隐藏</SubText>
      </SubBar>
      <Main>
        <LeftNav>
          <NavHead>
            <Ico n="sparkle" />
            <NavBtn $ml={66}><Ico n="navl" /></NavBtn>
            <NavBtn $ml={6}><Ico n="navw" /></NavBtn>
          </NavHead>
          {nav.map(([i, t, kid, on]) => (
            <NavRow key={t} $kid={kid} $on={on}>
              <NavIcon $kid={kid}><Ico n={i} s={kid ? 20 : 18} /></NavIcon>
              <span>{t}</span>
            </NavRow>
          ))}
          <NavScroll />
        </LeftNav>
        <MidCol>
          <Panel $h={425}>
            <PanelTitle>✕</PanelTitle>
            <TabRow><PanelTab $on>构件列表</PanelTab><PanelTab>图纸管理</PanelTab></TabRow>
            <PanelTools>
              <Ico n="newdoc" /><span>&nbsp;新建</span><Caret $gap={10} />
              <IconBox />
              <Ico n="deldoc" /><span>&nbsp;&nbsp;删除</span>
              <MoreTools><Tri $d="right" $c="#555" $s={4} /><Tri $d="right" $c="#555" $s={4} /></MoreTools>
            </PanelTools>
            <SearchBox>搜索构件...<Ico n="mag" s={15} /></SearchBox>
            <TreeBody>
              <TreeRow $pad={18}><TreeCorner />梁</TreeRow>
              <TreeRow $pad={42}><TreeCorner />非框架梁</TreeRow>
              <TreeRow $pad={0} $on>L8(1)</TreeRow>
              <TreeRow $pad={80}>TL(1) [不计混凝</TreeRow>
              <TreeRow $pad={80}>L17(2)</TreeRow>
              <TreeRow $pad={80}>XL1(XL)</TreeRow>
              <TreeRow $pad={80}>XL2(XL)</TreeRow>
            </TreeBody>
            <HThumb $l={17} $w={127} $b={6} />
          </Panel>
          <Panel $h={349}>
            <PanelTitle>✕</PanelTitle>
            <TabRow><PanelTab $on>属性列表</PanelTab><PanelTab>图层管理</PanelTab></TabRow>
            <PropHead>属性名称</PropHead>
            {props.map(([t, b], i) => (
              <PropRow key={t}><PropNum>{i + 1}</PropNum><PropName $blue={b}>{t}</PropName></PropRow>
            ))}
            <ScrollUp><Tri $d="up" /></ScrollUp>
            <VBarThumb />
            <ScrollDown><Tri $d="down" /></ScrollDown>
            <HArrowL><Tri $d="left" /></HArrowL>
            <HThumb $l={12} $w={53} $b={4} />
            <HArrowR><Tri $d="right" /></HArrowR>
          </Panel>
        </MidCol>
        <MidGap><MidTab /></MidGap>
        <Centre>
          <CanvasWrap>
            <CadCanvas />
            <ViewPanel><ViewIcons /></ViewPanel>
          </CanvasWrap>
          <Splitter><SplitTab><Tri $d="down" $c="#aab2ba" $s={3} /></SplitTab></Splitter>
          <BeamPanel>
            <PanelTitle>✕</PanelTitle>
            <BeamHead>梁平法表格</BeamHead>
            <BeamTools>
              <BeamTool $w={92}>复制跨数据</BeamTool>
              <BeamTool $w={93} $off>粘贴跨数据</BeamTool>
              <BeamTool $w={122} $off>输入当前列数据</BeamTool>
              <BeamTool $w={122} $off>删除当前列数据</BeamTool>
              <BeamTool $w={78}>页面设置</BeamTool>
              <BeamTool $w={92}>调换起始跨</BeamTool>
              <BeamTool $w={120}>悬臂钢筋代号</BeamTool>
            </BeamTools>
            <TableWrap>
              <Table>
                <colgroup>{widths.map((w, i) => <col key={i} width={w} />)}</colgroup>
                <thead>
                  <tr>
                    <Th rowSpan={2} />
                    <Th rowSpan={2}>位置</Th>
                    <Th rowSpan={2}>名称</Th>
                    <Th rowSpan={2} $blue>跨号</Th>
                    <Th colSpan={2}>标高</Th>
                    <Th colSpan={7}>构件尺寸(mm)</Th>
                    <Th rowSpan={2}>上通长筋</Th>
                    <Th colSpan={2} $right>上部钢筋</Th>
                  </tr>
                  <tr>
                    {["起点标高", "终点标高", "A1", "A2", "A3", "A4", "跨长", "截面(B*H)", "距左边线距离", "左支座钢筋", "跨中钢筋"].map(t => <Th key={t}>{t}</Th>)}
                  </tr>
                </thead>
                <tbody>
                  <tr>
                    <Td $num $numOn>1</Td>
                    <Td rowSpan={2} $wrap>&lt;18,K<br />+180;1...</Td>
                    <Td rowSpan={2}>L17(2)</Td>
                    <Td $active>1<Handle /></Td>
                    <Td>2.77</Td><Td>2.77</Td>
                    <Td>(100)</Td><Td>(100)</Td><Td>(100)</Td><Td />
                    <Td>(2400)</Td><Td>(160*300)</Td><Td>(80)</Td>
                    <Td>2<Rebar>虫</Rebar>16</Td><Td /><Td />
                  </tr>
                  <tr>
                    <Td $num>2</Td>
                    <Td>2</Td>
                    <Td>2.77</Td><Td>2.77</Td>
                    <Td /><Td>(100)</Td><Td>(100)</Td><Td>(100)</Td>
                    <Td>(2400)</Td><Td>(160*300)</Td><Td>(80)</Td>
                    <Td /><Td /><Td />
                  </tr>
                </tbody>
              </Table>
            </TableWrap>
            <BeamScroll>
              <BeamL><Tri $d="left" /></BeamL>
              <BeamThumb />
              <BeamR><Tri $d="right" /></BeamR>
            </BeamScroll>
          </BeamPanel>
        </Centre>
        <RightGap><RightTab /></RightGap>
        <RightPanel>
          <PanelTitle>✕</PanelTitle>
          <RightHead>显示设置</RightHead>
          <RightTabs><RTab $on>图元显示</RTab><RTab>楼层显示</RTab></RightTabs>
          <GridWrap>
            <GridHead><GridHCell>图层构件</GridHCell><GridHCell>显示图元</GridHCell><GridHCell>显示名称</GridHCell></GridHead>
            {layers.map((r, i) => (
              <GridRow key={i}>
                <TreeCell $l={r.l} $last={r.last} $root={r.root}>
                  {r.l < 2 && <Expander $l={r.l}><MinusBar /></Expander>}
                  {r.t}
                </TreeCell>
                <BoxCell><Check k={r.a} /></BoxCell>
                <BoxCell><Check k={r.b} /></BoxCell>
              </GridRow>
            ))}
            <GridUp><Tri $d="up" /></GridUp>
            <GridThumb />
            <GridDown><Tri $d="down" /></GridDown>
          </GridWrap>
          <RightFoot><ResetBtn>恢复默认设置</ResetBtn></RightFoot>
        </RightPanel>
      </Main>
      <Status>
        <StatusBtn $w={29} /><StatusBtn $w={45} $on /><StatusBtn $w={31} /><StatusBtn $w={44} /><StatusBtn $w={44} /><StatusBtn $w={90} /><StatusBtn $w={75} />
      </Status>
      <AnnotSvg width="1918" height="963" viewBox="0 0 1918 963" fill="none">
        <rect x="1393" y="5" width="125" height="42" rx="4" stroke="#ee1111" strokeWidth="3.500" />
        <rect x="383" y="833" width="399" height="60" rx="3" stroke="#ee1111" strokeWidth="2.500" />
        <polygon points="1402.600,53.500 1401.400,52.500 717.400,789.600 722.600,794.400" fill="#f01c10" />
        <polygon points="708,802 712,782 726,795" fill="#f01c10" />
      </AnnotSvg>
    </Root>
  );
}
